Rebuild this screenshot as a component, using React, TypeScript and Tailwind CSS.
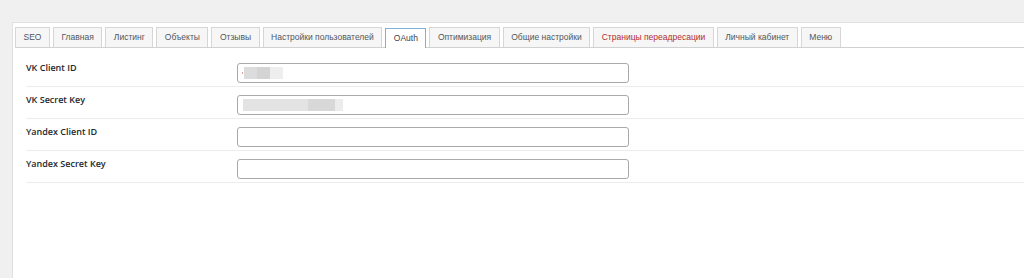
const tabs = [
  { label: 'SEO' },
  { label: 'Главная' },
  { label: 'Листинг' },
  { label: 'Объекты' },
  { label: 'Отзывы' },
  { label: 'Настройки пользователей' },
  { label: 'OAuth', active: true },
  { label: 'Оптимизация' },
  { label: 'Общие настройки' },
  { label: 'Страницы переадресации', danger: true },
  { label: 'Личный кабинет' },
  { label: 'Меню' },
];

const fields = [
  { label: 'VK Client ID', blur: 'short' },
  { label: 'VK Secret Key', blur: 'long' },
  { label: 'Yandex Client ID' },
  { label: 'Yandex Secret Key' },
];

function BlurValue({ kind }: { kind?: string }) {
  if (kind === 'short') {
    return (
      <div className="flex items-center h-full pl-[4px]">
        <span className="w-px h-[2px] bg-[#e0a0a0] mr-[1px]" />
        <span className="w-[13px] h-[12px] bg-[#dcdcdc]" />
        <span className="w-[13px] h-[12px] bg-[#d4d4d4]" />
        <span className="w-[13px] h-[12px] bg-[#eeeeee]" />
      </div>
    );
  }
  if (kind === 'long') {
    return (
      <div className="flex items-center h-full pl-[5px]">
        <span className="w-[65px] h-[12px] bg-[#e3e3e3]" />
        <span className="w-[27px] h-[12px] bg-[#d8d8d8]" />
        <span className="w-[8px] h-[12px] bg-[#ececec]" />
      </div>
    );
  }
  return null;
}

export default function App() {
  return (
    <div className="w-[1024px] h-[278px] bg-[#f0f0f1] overflow-hidden pt-[22px] pl-[12px]" style={{ fontFamily: 'Arial, "Liberation Sans", sans-serif' }}>
      <div className="h-full bg-white border-l border-t border-[#e0e0e2] pt-[4px] pl-[2px]">
        {/* Tabs */}
        <div className="flex items-end gap-[3px] h-[21px] border-b border-[#d0d1d3]">
          {tabs.map((t) => (
            <div
              key={t.label}
              className={
                t.active
                  ? 'h-[20px] -mb-px px-[7.5px] flex items-center bg-white border border-b-0 border-[#7fb0da] text-[8.5px] text-[#3c434a]'
                  : 'h-[20px] px-[7.5px] flex items-center bg-[#f6f6f6] border border-b-0 border-[#d6d6d6] text-[8.5px] ' +
                    (t.danger ? 'text-[#b32d2e]' : 'text-[#50575e]')
              }
            >
              {t.label}
            </div>
          ))}
        </div>

        {/* Form */}
        <div className="pl-[11px] pt-[7px]">
          {fields.map((f) => (
            <div key={f.label} className="flex h-[32px] border-b border-[#ececec]">
              <div className="w-[211px] pt-[6px] text-[9px] font-semibold text-[#23282d]" style={{ fontFamily: '"Open Sans", sans-serif' }}>
                {f.label}
              </div>
              <div className="pt-[8px]">
                <div className="w-[392px] h-[20px] rounded-[3px] border border-[#a7aaad] bg-white">
                  <BlurValue kind={f.blur} />
                </div>
              </div>
            </div>
          ))}
        </div>
      </div>
    </div>
  );
}
